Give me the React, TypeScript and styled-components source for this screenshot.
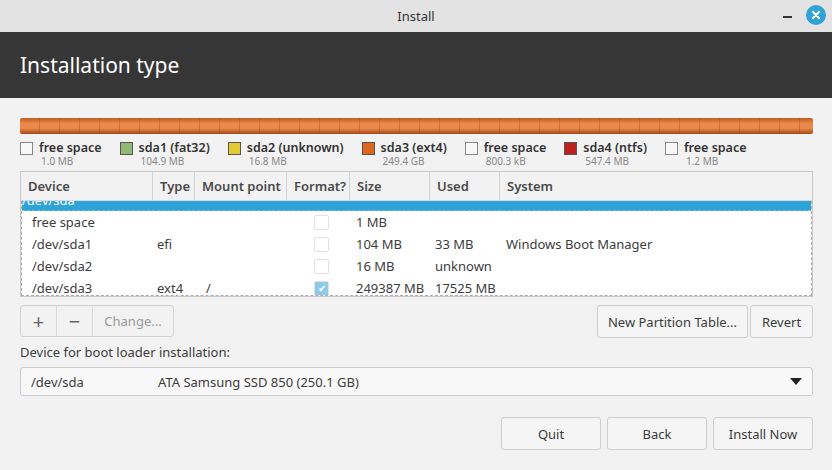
import React from "react";
import styled, { createGlobalStyle } from "styled-components";

const G = createGlobalStyle`
  html,body{margin:0;padding:0;background:#f2f2f2;}
  body{font-family:"Noto Sans","Open Sans",sans-serif;font-size:13px;color:#3c3c3c;}
`;
const Win = styled.div`width:832px;height:470px;display:flex;flex-direction:column;background:#f2f2f2;overflow:hidden;`;
const TitleBar = styled.div`height:32px;background:#e3e3e3;display:flex;align-items:center;justify-content:center;position:relative;font-size:13px;color:#333;`;
const WinCtl = styled.div`position:absolute;right:6px;top:5px;display:flex;align-items:center;gap:14px;`;
const Min = styled.div`width:9px;height:1.5px;background:#333;margin-top:4px;`;
const Close = styled.div`width:20px;height:20px;border-radius:50%;background:#2fa3d6;color:#fff;display:flex;align-items:center;justify-content:center;`;
const Header = styled.div`height:66px;background:#363636;color:#fff;font-size:21px;display:flex;align-items:center;padding-left:20px;`;
const Body = styled.div`flex:1;padding:20px 19px 0 20px;display:flex;flex-direction:column;`;
const Bar = styled.div`height:16px;border-radius:2px;background:
  repeating-linear-gradient(90deg, transparent 0 19px, rgba(150,70,20,.35) 19px 20px),
  linear-gradient(#c05a22, #e98a4c 35%, #e8874a 65%, #a54718);`;
const Legend = styled.div`display:flex;gap:18px;margin-top:6px;height:31px;`;
const LItem = styled.div`display:flex;gap:6px;`;
const Sq = styled.div<{ c: string }>`width:11px;height:11px;margin-top:2px;border:1px solid ${p => p.c === "#f8f8f8" ? "#888" : "#555"};background:${p => p.c};`;
const LName = styled.div`font-weight:600;font-size:12.5px;color:#333;line-height:15px;`;
const LSize = styled.div`font-size:10px;color:#888;line-height:13px;margin-left:2px;`;
const Table = styled.div`border:1px solid #c8c8c8;background:#fff;height:124px;display:flex;flex-direction:column;`;
const cols = "132px 42px 92px 63px 80px 70px 1fr";
const Head = styled.div`display:grid;grid-template-columns:${cols};height:28px;flex-shrink:0;background:#f2f2f2;border-bottom:1px solid #d8d8d8;`;
const HCell = styled.div<{ last?: boolean }>`font-weight:600;font-size:13px;color:#4a4a4a;padding-left:7px;display:flex;align-items:center;border-right:${p => p.last ? "none" : "1px solid #d4d4d4"};`;
const Rows = styled.div`flex:1;overflow:hidden;border:1px dashed #aaa;border-top:none;`;
const Row = styled.div<{ sel?: boolean }>`display:grid;grid-template-columns:${cols};height:22px;align-items:center;${p => p.sel ? "background:#2ea3d8;color:#fff;margin-top:-12px;border-bottom:1px dashed #7bc;box-sizing:border-box;" : ""}`;
const Cell = styled.div`padding-left:10px;white-space:nowrap;`;
const Chk = styled.div<{ on?: boolean }>`width:13px;height:13px;margin-left:26px;border:1px solid #e2e2e2;border-radius:2px;background:${p => p.on ? "#8ccbe8" : "#fff"};color:#fff;font-size:10px;display:flex;align-items:center;justify-content:center;`;
const BtnRow = styled.div`display:flex;justify-content:space-between;margin-top:8px;`;
const Group = styled.div`display:flex;gap:2px;`;
const Seg = styled.div`display:flex;border:1px solid #d2d2d2;border-radius:3px;height:32px;overflow:hidden;box-sizing:border-box;`;
const SegBtn = styled.div<{ w: number; dim?: boolean }>`width:${p => p.w}px;display:flex;align-items:center;justify-content:center;color:${p => p.dim ? "#999" : "#666"};font-size:${p => p.dim ? 13 : 20}px;& + &{border-left:1px solid #d8d8d8;}`;
const Btn = styled.div<{ w: number }>`width:${p => p.w}px;height:33px;border:1px solid #cfcfcf;border-radius:3px;background:#f5f5f5;display:flex;align-items:center;justify-content:center;color:#3c3c3c;box-sizing:border-box;`;
const Label = styled.div`margin-top:4px;height:20px;display:flex;align-items:center;`;
const Combo = styled.div`margin-top:5px;height:29px;box-sizing:border-box;border:1px solid #ccc;border-radius:3px;background:#f8f8f8;display:flex;align-items:center;padding:0 10px;`;
const CDev = styled.div`width:127px;`;
const Arrow = styled.div`margin-left:auto;width:0;height:0;border-left:6px solid transparent;border-right:6px solid transparent;border-top:7px solid #222;`;
const Footer = styled.div`display:flex;justify-content:flex-end;gap:6px;margin-top:21px;`;

const legend = [
  ["#f8f8f8", "free space", "1.0 MB"], ["#92b973", "sda1 (fat32)", "104.9 MB"], ["#e3cb35", "sda2 (unknown)", "16.8 MB"],
  ["#e0661f", "sda3 (ext4)", "249.4 GB"], ["#f8f8f8", "free space", "800.3 kB"], ["#c0201d", "sda4 (ntfs)", "547.4 MB"], ["#f8f8f8", "free space", "1.2 MB"],
];
const rows = [
  ["free space", "", "", false, "1 MB", "", ""], ["/dev/sda1", "efi", "", false, "104 MB", "33 MB", "Windows Boot Manager"],
  ["/dev/sda2", "", "", false, "16 MB", "unknown", ""], ["/dev/sda3", "ext4", "/", true, "249387 MB", "17525 MB", ""],
] as const;

export default function App() {
  return (
    <Win>
      <G />
      <TitleBar>Install<WinCtl><Min /><Close>
        <svg width="10" height="10" viewBox="0 0 10 10"><path d="M2 2L8 8M8 2L2 8" stroke="#fff" strokeWidth="2.2" strokeLinecap="round" /></svg>
      </Close></WinCtl></TitleBar>
      <Header>Installation type</Header>
      <Body>
        <Bar />
        <Legend>
          {legend.map((l, i) => (
            <LItem key={i}><Sq c={l[0]} /><div><LName>{l[1]}</LName><LSize>{l[2]}</LSize></div></LItem>
          ))}
        </Legend>
        <Table>
          <Head>{["Device", "Type", "Mount point", "Format?", "Size", "Used", "System"].map((h, i) => <HCell key={h} last={i === 6}>{h}</HCell>)}</Head>
          <Rows>
            <Row sel><Cell style={{ paddingLeft: 0 }}>/dev/sda</Cell></Row>
            {rows.map((r, i) => (
              <Row key={i}>
                <Cell>{r[0]}</Cell><Cell style={{ paddingLeft: 3 }}>{r[1]}</Cell><Cell>{r[2]}</Cell>
                <div><Chk on={r[3]}>{r[3] ? "✔" : ""}</Chk></div>
                <Cell style={{ paddingLeft: 5 }}>{r[4]}</Cell><Cell style={{ paddingLeft: 4 }}>{r[5]}</Cell><Cell style={{ paddingLeft: 5 }}>{r[6]}</Cell>
              </Row>
            ))}
          </Rows>
        </Table>
        <BtnRow>
          <Seg><SegBtn w={35}>+</SegBtn><SegBtn w={35}>−</SegBtn><SegBtn w={80} dim>Change...</SegBtn></Seg>
          <Group><Btn w={151}>New Partition Table...</Btn><Btn w={63}>Revert</Btn></Group>
        </BtnRow>
        <Label>Device for boot loader installation:</Label>
        <Combo><CDev>/dev/sda</CDev>ATA Samsung SSD 850 (250.1 GB)<Arrow /></Combo>
        <Footer><Btn w={100}>Quit</Btn><Btn w={100}>Back</Btn><Btn w={100}>Install Now</Btn></Footer>
      </Body>
    </Win>
  );
}
